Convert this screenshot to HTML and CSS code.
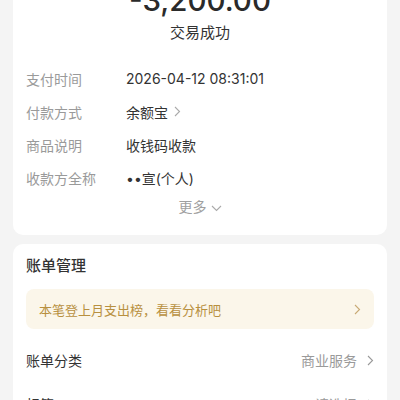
FILE: index.html
```html
<!DOCTYPE html>
<html lang="zh-CN">
<head>
<meta charset="utf-8">
<link rel="stylesheet" href="styles.css">
</head>
<body>
<div class="page">
  <section class="card detail">
    <div class="amount">-3,200.00</div>
    <div class="status">交易成功</div>
    <div class="rows">
      <div class="row"><span class="label">支付时间</span><span class="value">2026-04-12 08:31:01</span></div>
      <div class="row"><span class="label">付款方式</span><span class="value">余额宝<svg class="chev" width="7" height="11" viewBox="0 0 7 11"><path d="M1 1l4.5 4.5L1 10" fill="none" stroke="#aaa" stroke-width="1.1"/></svg></span></div>
      <div class="row"><span class="label">商品说明</span><span class="value">收钱码收款</span></div>
      <div class="row"><span class="label">收款方全称</span><span class="value">••宣(个人)</span></div>
    </div>
    <div class="more">更多<svg class="down" width="11" height="7" viewBox="0 0 11 7"><path d="M1 1l4.5 4.5L10 1" fill="none" stroke="#aaa" stroke-width="1.1"/></svg></div>
  </section>
  <section class="card manage">
    <h2 class="title">账单管理</h2>
    <div class="banner"><span>本笔登上月支出榜，看看分析吧</span><svg width="7" height="11" viewBox="0 0 7 11"><path d="M1 1l4.5 4.5L1 10" fill="none" stroke="#c9aa75" stroke-width="1.1"/></svg></div>
    <div class="item"><span class="item-label">账单分类</span><span class="item-value">商业服务<svg class="chev" width="7" height="11" viewBox="0 0 7 11"><path d="M1 1l4.5 4.5L1 10" fill="none" stroke="#999" stroke-width="1.1"/></svg></span></div>
    <div class="item"><span class="item-label">标签</span><span class="item-value">请选择<svg class="chev" width="7" height="11" viewBox="0 0 7 11"><path d="M1 1l4.5 4.5L1 10" fill="none" stroke="#999" stroke-width="1.1"/></svg></span></div>
  </section>
</div>
</body>
</html>
```
FILE: styles.css
```css
* { box-sizing: border-box; }
html, body { margin: 0; padding: 0; }
body {
  background: #f4f4f4;
  font-family: "Inter", "Noto Sans CJK SC", sans-serif;
  color: #333;
  overflow: hidden;
  height: 400px;
}
.page {
  padding: 0 13px;
  margin-top: -30px;
}
.card {
  background: #fff;
  border-radius: 10px;
  padding: 0 13px;
}
.detail {
  padding-top: 12px;
  padding-bottom: 17px;
}
.amount {
  text-align: center;
  font-size: 29.5px;
  font-weight: 500;
  line-height: 36px;
  color: #2a2a2a;
}
.status {
  text-align: center;
  font-size: 15px;
  line-height: 22px;
  margin-top: 4px;
  color: #333;
}
.rows { margin-top: 18px; }
.row {
  display: flex;
  align-items: center;
  height: 33px;
  font-size: 14px;
}
.label { width: 100px; color: #9a9a9a; flex: none; }
.value { color: #333; display: flex; align-items: center; }
.chev { margin-left: 6px; }
.more {
  display: flex;
  justify-content: center;
  align-items: center;
  gap: 4px;
  font-size: 14px;
  line-height: 22px;
  color: #a0a0a0;
  margin-top: 2px;
}
.down { margin-top: 3px; }
.manage {
  margin-top: 9px;
  padding-top: 11px;
}
.title {
  margin: 0;
  font-size: 15px;
  font-weight: 500;
  line-height: 22px;
  color: #333;
}
.banner {
  margin-top: 12px;
  height: 40px;
  border-radius: 8px;
  background: #fbf6ea;
  display: flex;
  align-items: center;
  justify-content: space-between;
  padding: 0 13px;
  font-size: 13px;
  color: #b8903f;
}
.item {
  display: flex;
  align-items: center;
  justify-content: space-between;
  height: 44px;
  font-size: 14px;
}
.banner + .item { margin-top: 9px; }
.item-label { color: #333; }
.item-value { color: #9a9a9a; display: flex; align-items: center; }
.item-value .chev { margin-left: 10px; }
```
